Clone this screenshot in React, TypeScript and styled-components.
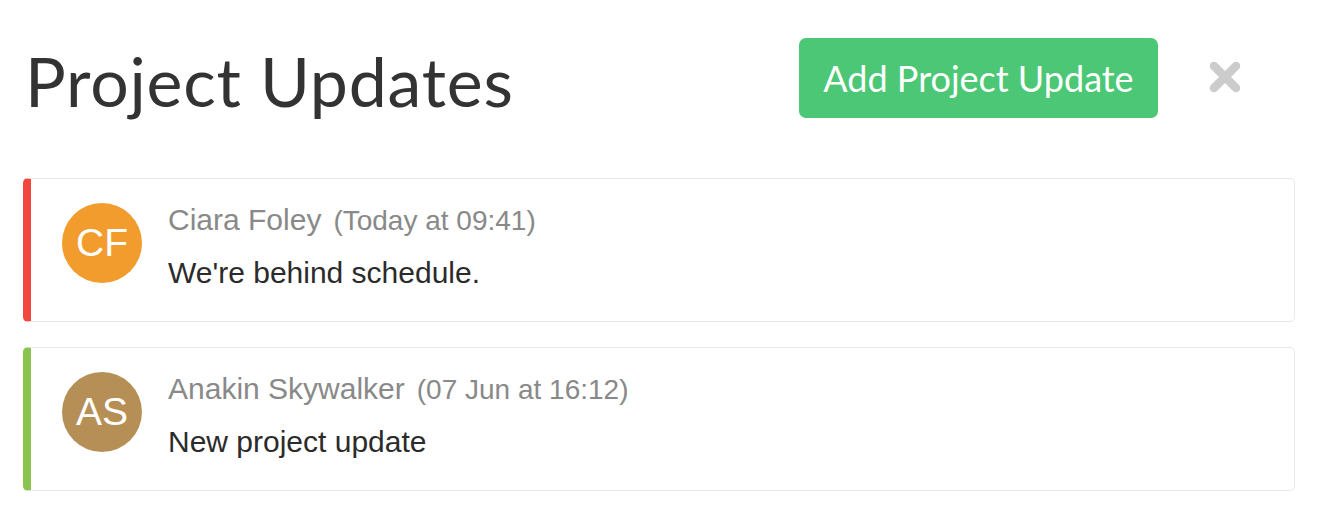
import React from "react";
import styled, { createGlobalStyle } from "styled-components";

const Global = createGlobalStyle`
  html, body { margin: 0; padding: 0; background: #ffffff; }
  body { font-family: "Liberation Sans", Arial, sans-serif; }
`;

const Page = styled.div`
  padding: 38px 23px 0 23px;
  box-sizing: border-box;
  width: 1318px;
`;

const Header = styled.div`
  display: flex;
  align-items: center;
  justify-content: space-between;
  height: 80px;
  margin-bottom: 60px;
`;

const Title = styled.h1`
  margin: 0 0 0 2px;
  font-family: Lato, "Open Sans", sans-serif;
  font-weight: 400;
  font-size: 68px;
  letter-spacing: 0.8px;
  line-height: 80px;
  color: #333333;
  padding-top: 6px;
`;

const Actions = styled.div`
  display: flex;
  align-items: center;
  gap: 51px;
  padding-right: 54px;
`;

const AddButton = styled.button`
  height: 80px;
  width: 359px;
  border: none;
  border-radius: 7px;
  background: #4bc776;
  color: #ffffff;
  font-family: Lato, "Open Sans", sans-serif;
  font-size: 36px;
  font-weight: 400;
  padding: 0;
  cursor: pointer;
`;

const CloseButton = styled.button`
  width: 32px;
  height: 32px;
  padding: 0;
  border: none;
  background: none;
  display: flex;
  margin-top: -2px;
  cursor: pointer;
`;

const List = styled.div`
  display: flex;
  flex-direction: column;
  gap: 25px;
`;

const Card = styled.div<{ $accent: string }>`
  display: flex;
  align-items: flex-start;
  gap: 26px;
  height: 144px;
  box-sizing: border-box;
  border: 1px solid #e8e8e8;
  border-left: 8px solid ${(p) => p.$accent};
  border-radius: 5px;
  padding: 24px 30px 0 31px;
`;

const Avatar = styled.div<{ $bg: string }>`
  width: 80px;
  height: 80px;
  border-radius: 50%;
  background: ${(p) => p.$bg};
  color: #ffffff;
  display: flex;
  align-items: center;
  justify-content: center;
  font-size: 39px;
  flex-shrink: 0;
`;

const Body = styled.div`
  display: flex;
  flex-direction: column;
  gap: 18px;
`;

const Meta = styled.div`
  display: flex;
  align-items: baseline;
  gap: 12px;
  line-height: 34px;
`;

const Name = styled.span`
  font-size: 30px;
  color: #898989;
`;

const Time = styled.span`
  font-size: 28px;
  color: #898989;
`;

const Message = styled.div`
  font-size: 30px;
  line-height: 34px;
  color: #2b2b2b;
`;

const updates = [
  {
    initials: "CF",
    name: "Ciara Foley",
    time: "(Today at 09:41)",
    text: "We're behind schedule.",
    accent: "#f2463f",
    avatar: "#f29c2e",
  },
  {
    initials: "AS",
    name: "Anakin Skywalker",
    time: "(07 Jun at 16:12)",
    text: "New project update",
    accent: "#8bc34f",
    avatar: "#b68f56",
  },
];

export default function App() {
  return (
    <>
      <Global />
      <Page>
        <Header>
          <Title>Project Updates</Title>
          <Actions>
            <AddButton>Add Project Update</AddButton>
            <CloseButton aria-label="Close">
              <svg width="32" height="32" viewBox="0 0 32 32">
                <path
                  d="M5 5 L27 27 M27 5 L5 27"
                  stroke="#cccccc"
                  strokeWidth="8.5"
                  strokeLinecap="round"
                  fill="none"
                />
              </svg>
            </CloseButton>
          </Actions>
        </Header>
        <List>
          {updates.map((u) => (
            <Card key={u.name} $accent={u.accent}>
              <Avatar $bg={u.avatar}>{u.initials}</Avatar>
              <Body>
                <Meta>
                  <Name>{u.name}</Name>
                  <Time>{u.time}</Time>
                </Meta>
                <Message>{u.text}</Message>
              </Body>
            </Card>
          ))}
        </List>
      </Page>
    </>
  );
}
